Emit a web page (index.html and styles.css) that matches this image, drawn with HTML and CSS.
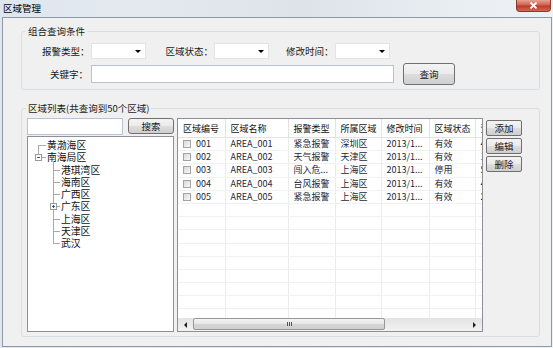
FILE: index.html
```html
<!DOCTYPE html>
<html lang="zh-CN">
<head>
  <meta charset="UTF-8" />
  <title>区域管理</title>
  <link rel="stylesheet" href="styles.css">
</head>
<body>

<div class="window">
  <div class="titlebar">
    <span class="title">区域管理</span>
    <span class="close">
      <svg width="9" height="7" viewBox="0 0 9 7"><path d="M1.5 0.5 L7.5 6.5 M7.5 0.5 L1.5 6.5" stroke="#fff" stroke-width="1.8"/></svg>
    </span>
  </div>

  <div class="frame">
    <fieldset class="group query">
      <legend>组合查询条件</legend>
      <div class="row row1">
        <label class="lbl">报警类型：</label><span class="combo"></span>
        <label class="lbl gap2">区域状态：</label><span class="combo"></span>
        <label class="lbl gap3">修改时间：</label><span class="combo"></span>
      </div>
      <div class="row row2">
        <label class="lbl">关键字：</label>
        <input class="text keyword" type="text">
        <button class="btn query-btn">查询</button>
      </div>
    </fieldset>

    <fieldset class="group list">
      <legend>区域列表(共查询到50个区域)</legend>
      <div class="list-body">
        <div class="side">
          <div class="search">
            <input class="text" type="text">
            <button class="btn">搜索</button>
          </div>
          <div class="tree">
            <div class="node root first">黄渤海区</div>
            <div class="node root open"><span class="toggle"></span>南海局区</div>
            <div class="node child top">港琪湾区</div>
            <div class="node child">海南区</div>
            <div class="node child">广西区</div>
            <div class="node child"><span class="toggle plus"></span>广东区</div>
            <div class="node child">上海区</div>
            <div class="node child">天津区</div>
            <div class="node child last">武汉</div>
          </div>
        </div>

        <div class="grid">
          <div class="grid-view">
            <table>
              <colgroup>
                <col style="width:47px"><col style="width:63px"><col style="width:47px"><col style="width:46px"><col style="width:48px"><col style="width:46px"><col style="width:46px">
              </colgroup>
              <thead>
                <tr><th>区域编号</th><th>区域名称</th><th>报警类型</th><th>所属区域</th><th>修改时间</th><th>区域状态</th><th>预警级别</th></tr>
              </thead>
              <tbody>
                <tr><td><span class="check"></span>001</td><td>AREA_001</td><td>紧急报警</td><td>深圳区</td><td>2013/1...</td><td>有效</td><td>4</td></tr>
                <tr><td><span class="check"></span>002</td><td>AREA_002</td><td>天气报警</td><td>天津区</td><td>2013/1...</td><td>有效</td><td>1</td></tr>
                <tr><td><span class="check"></span>003</td><td>AREA_003</td><td>闯入危...</td><td>上海区</td><td>2013/1...</td><td>停用</td><td>5</td></tr>
                <tr><td><span class="check"></span>004</td><td>AREA_004</td><td>台风报警</td><td>上海区</td><td>2013/1...</td><td>有效</td><td>4</td></tr>
                <tr><td><span class="check"></span>005</td><td>AREA_005</td><td>紧急报警</td><td>上海区</td><td>2013/1...</td><td>有效</td><td>2</td></tr>
                <tr><td></td><td></td><td></td><td></td><td></td><td></td><td></td></tr>
                <tr><td></td><td></td><td></td><td></td><td></td><td></td><td></td></tr>
                <tr><td></td><td></td><td></td><td></td><td></td><td></td><td></td></tr>
                <tr><td></td><td></td><td></td><td></td><td></td><td></td><td></td></tr>
                <tr><td></td><td></td><td></td><td></td><td></td><td></td><td></td></tr>
                <tr><td></td><td></td><td></td><td></td><td></td><td></td><td></td></tr>
                <tr><td></td><td></td><td></td><td></td><td></td><td></td><td></td></tr>
                <tr><td></td><td></td><td></td><td></td><td></td><td></td><td></td></tr>
                <tr><td></td><td></td><td></td><td></td><td></td><td></td><td></td></tr>
              </tbody>
            </table>
          </div>
          <div class="hscroll">
            <span class="arrow left"></span>
            <span class="track"><span class="thumb"><span class="grip"></span></span></span>
            <span class="arrow right"></span>
          </div>
        </div>

        <div class="actions">
          <button class="btn">添加</button>
          <button class="btn">编辑</button>
          <button class="btn">删除</button>
        </div>
      </div>
    </fieldset>
  </div>
</div>

</body>
</html>
```

FILE: styles.css
```css
body {
  margin: 0;
  font-family: "Noto Sans CJK SC", "Noto Sans", sans-serif;
  font-size: 9.5px;
  color: #1a1a1a;
}

.window {
  width: 553px;
  height: 348px;
  display: flex;
  flex-direction: column;
  background: linear-gradient(to right, #dfe6ee, #e4e9ef 25%, #dde3e9 55%, #e8edf2 80%, #eef2f6);
  overflow: hidden;
}

/* title bar */
.titlebar {
  height: 17px;
  flex-shrink: 0;
  display: flex;
  justify-content: space-between;
  align-items: flex-start;
}

.title {
  line-height: 17px;
  padding-left: 3px;
  color: #000;
}

.close {
  width: 35px;
  height: 12px;
  margin-right: 2px;
  display: flex;
  align-items: center;
  justify-content: center;
  background: linear-gradient(#e6a295, #d0624f 45%, #c0392b 55%, #cf6a52);
  border: 1px solid #8a3a2c;
  border-top: none;
  border-radius: 0 0 4px 4px;
  box-sizing: border-box;
}

/* client area */
.frame {
  flex: 1;
  margin: 0 1px 1px 2px;
  background: #f0f0f0;
  border: 1px solid #8e9aa7;
}

.group {
  margin: 0 11px 0 18px;
  padding: 0;
  border: 1px solid #d5dfe5;
  border-radius: 3px;
  min-width: 0;
}

.group legend {
  margin-left: 4px;
  padding: 0 2px;
  line-height: 13px;
  color: #1a1a1a;
}

.query {
  margin-top: 7px;
  padding: 5px 0 4px 0;
}

.row {
  display: flex;
  align-items: center;
}

.row1 {
  height: 16px;
  padding-left: 20px;
}

.row2 {
  height: 22px;
  margin-top: 4px;
  padding-left: 28px;
}

.lbl {
  margin-right: 1px;
  white-space: nowrap;
}

.gap2 { margin-left: 20px; }
.gap3 { margin-left: 17px; }

.combo {
  position: relative;
  width: 55px;
  height: 16px;
  background: #fff;
  border: 1px solid #e4e4e4;
  box-sizing: border-box;
}

.combo::after {
  content: "";
  position: absolute;
  right: 4px;
  top: 6px;
  border-top: 3px solid #000;
  border-left: 3px solid transparent;
  border-right: 3px solid transparent;
}

.text {
  margin: 0;
  padding: 0 2px;
  background: #fff;
  border: 1px solid #b5c3d3;
  box-sizing: border-box;
  font: inherit;
  outline: none;
}

.keyword {
  width: 303px;
  height: 18px;
  margin-left: 2px;
}

.btn {
  margin: 0;
  padding: 0;
  font: inherit;
  color: #1a1a1a;
  border: 1px solid #707070;
  border-radius: 3px;
  background: linear-gradient(#f3f3f3, #ebebeb 48%, #dddddd 52%, #cfcfcf);
  box-sizing: border-box;
}

.query-btn {
  width: 52px;
  height: 22px;
  margin-left: 9px;
}

/* list group */
.list {
  margin-top: 12px;
  padding: 3px 0 4px 5px;
}

.list legend {
  margin-left: -1px;
}

.list-body {
  display: flex;
  gap: 3px;
  height: 214px;
}

.side {
  width: 147px;
  display: flex;
  flex-direction: column;
  gap: 1px;
}

.search {
  display: flex;
  height: 17px;
  gap: 5px;
}

.search .text {
  width: 96px;
  height: 17px;
}

.search .btn {
  width: 46px;
  height: 16px;
}

.tree {
  height: 196px;
  padding-top: 2px;
  background: #fff;
  border: 1px solid #8d9096;
  box-sizing: border-box;
  font-size: 9.8px;
}

.node {
  position: relative;
  height: 12.3px;
  line-height: 12.3px;
  padding-left: 19px;
  white-space: nowrap;
  color: #111;
}

.node::before {
  content: "";
  position: absolute;
  left: 10px;
  width: 8px;
  top: 6px;
  border-top: 1px solid #a9a9a9;
}

.node::after {
  content: "";
  position: absolute;
  left: 10px;
  border-left: 1px solid #a9a9a9;
}

.root.first::after { top: 6px; bottom: 0; }
.root.open::after { top: 0; height: 3px; }

.child { padding-left: 33px; }
.child::before { left: 25px; width: 7px; }
.child::after { left: 25px; top: 0; bottom: 0; }
.child.top::after { top: -3px; }
.child.last::after { bottom: auto; height: 6px; }

.toggle {
  position: absolute;
  left: 7px;
  top: 3px;
  width: 7px;
  height: 7px;
  background: #fff;
  border: 1px solid #9a9a9a;
  box-sizing: border-box;
  z-index: 1;
}

.toggle::before {
  content: "";
  position: absolute;
  left: 1px;
  top: 2px;
  width: 3px;
  border-top: 1px solid #2a5a9a;
}

.toggle.plus { left: 22px; }

.toggle.plus::after {
  content: "";
  position: absolute;
  left: 2px;
  top: 1px;
  height: 3px;
  border-left: 1px solid #2a5a9a;
}

/* grid */
.grid {
  width: 306px;
  display: flex;
  flex-direction: column;
  background: #fff;
  border: 1px solid #8d9096;
  box-sizing: border-box;
}

.grid-view {
  height: 199px;
  overflow: hidden;
}

table {
  table-layout: fixed;
  border-collapse: collapse;
  width: 343px;
  font-size: 9px;
}

th, td {
  padding: 0 0 0 5px;
  text-align: left;
  white-space: nowrap;
  overflow: hidden;
  border-right: 1px solid #ececec;
}

th {
  height: 18px;
  font-weight: normal;
  color: #111;
  border-bottom: 1px solid #e2e2e2;
  border-right-color: #e2e2e2;
}

td {
  height: 12.2px;
  line-height: 12px;
  color: #22283a;
  border-bottom: 1px solid #f1f1f1;
}

.check {
  display: inline-block;
  width: 8px;
  height: 8px;
  margin-right: 5px;
  vertical-align: -1px;
  border: 1px solid #a3a3a3;
  background: linear-gradient(135deg, #dadada, #f8f8f8);
  box-sizing: border-box;
}

.hscroll {
  height: 13px;
  display: flex;
  align-items: stretch;
  background: linear-gradient(#e3e3e3, #f2f2f2);
}

.arrow {
  width: 15px;
  display: flex;
  align-items: center;
  justify-content: center;
}

.arrow::before {
  content: "";
  border-top: 3px solid transparent;
  border-bottom: 3px solid transparent;
}

.arrow.left::before { border-right: 3px solid #222; }
.arrow.right::before { border-left: 3px solid #222; }

.track {
  flex: 1;
}

.thumb {
  display: flex;
  align-items: center;
  justify-content: center;
  width: 192px;
  height: 12px;
  border: 1px solid #979797;
  border-radius: 2px;
  background: linear-gradient(#f4f4f4, #e6e6e6 50%, #d6d6d6 51%, #cfcfcf);
  box-sizing: border-box;
}

.grip {
  width: 5px;
  height: 4px;
  background: repeating-linear-gradient(to right, #555 0 1px, transparent 1px 2px);
}

/* side buttons */
.actions {
  width: 36px;
  padding-top: 2px;
  display: flex;
  flex-direction: column;
  gap: 2px;
}

.actions .btn {
  height: 16px;
  border-radius: 2px;
}
```
